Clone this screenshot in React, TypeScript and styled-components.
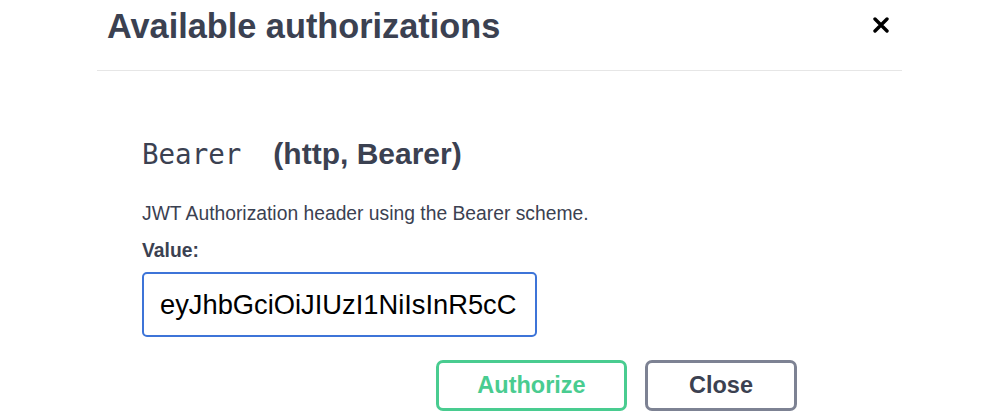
import styled, { createGlobalStyle } from "styled-components";

const GlobalStyle = createGlobalStyle`
  html, body {
    margin: 0;
    padding: 0;
    background: #ffffff;
    font-family: "Liberation Sans", Arial, sans-serif;
  }
`;

const Page = styled.div`
  width: 998px;
  height: 418px;
  overflow: hidden;
  background: #ffffff;
`;

const Modal = styled.div`
  width: 805px;
  margin-left: 97px;
`;

const Header = styled.div`
  display: flex;
  justify-content: space-between;
  align-items: flex-start;
  height: 64px;
  padding: 6px 13px 0 10px;
  border-bottom: 1px solid #e6e6e6;
`;

const Title = styled.h3`
  margin: 0;
  font-size: 34.3px;
  line-height: 40px;
  font-weight: 700;
  color: #3b4151;
`;

const CloseIcon = styled.button`
  margin-top: 11px;
  padding: 0;
  border: none;
  background: none;
  width: 16px;
  height: 16px;
  display: flex;
  cursor: pointer;
`;

const Body = styled.div`
  padding: 65px 0 0 45px;
`;

const SchemeTitle = styled.h4`
  margin: 0;
  font-size: 30px;
  line-height: 36px;
  font-weight: 700;
  color: #3b4151;
`;

const SchemeName = styled.code`
  font-family: "DejaVu Sans Mono", monospace;
  font-size: 27.5px;
  font-weight: 400;
  margin-right: 32px;
`;

const Description = styled.p`
  margin: 30px 0 0;
  font-size: 19.3px;
  line-height: 24px;
  color: #3b4151;
`;

const Label = styled.label`
  display: block;
  margin-top: 13px;
  font-size: 19.3px;
  line-height: 24px;
  font-weight: 700;
  color: #3b4151;
`;

const TokenInput = styled.input`
  display: block;
  box-sizing: border-box;
  margin-top: 9px;
  width: 395px;
  height: 65px;
  padding: 0 15px 0 16px;
  border: 2px solid #3d74d8;
  border-radius: 5px;
  font-family: "Liberation Sans", Arial, sans-serif;
  font-size: 27.3px;
  color: #000000;
  background: #ffffff;
  outline: none;
`;

const Actions = styled.div`
  display: flex;
  justify-content: flex-end;
  gap: 18px;
  margin-top: 23px;
  padding-right: 105px;
`;

const ActionButton = styled.button<{ $tone: "primary" | "neutral"; $w: number }>`
  box-sizing: border-box;
  width: ${(p) => p.$w}px;
  height: 51px;
  border-radius: 7px;
  background: #ffffff;
  font-family: "Liberation Sans", Arial, sans-serif;
  font-size: 23.5px;
  font-weight: 700;
  cursor: pointer;
  border: 3px solid ${(p) => (p.$tone === "primary" ? "#49cc90" : "#7d8293")};
  color: ${(p) => (p.$tone === "primary" ? "#49cc90" : "#3b4151")};
`;

export default function App() {
  return (
    <Page>
      <GlobalStyle />
      <Modal>
        <Header>
          <Title>Available authorizations</Title>
          <CloseIcon aria-label="Close">
            <svg width="16" height="16" viewBox="0 0 16 16">
              <path
                d="M2 2 L14 14 M14 2 L2 14"
                stroke="#000000"
                strokeWidth="3.4"
                strokeLinecap="round"
                fill="none"
              />
            </svg>
          </CloseIcon>
        </Header>
        <Body>
          <SchemeTitle>
            <SchemeName>Bearer</SchemeName>(http, Bearer)
          </SchemeTitle>
          <Description>JWT Authorization header using the Bearer scheme.</Description>
          <Label htmlFor="token">Value:</Label>
          <TokenInput id="token" type="text" defaultValue="eyJhbGciOiJIUzI1NiIsInR5cC" />
          <Actions>
            <ActionButton $tone="primary" $w={191}>Authorize</ActionButton>
            <ActionButton $tone="neutral" $w={152}>Close</ActionButton>
          </Actions>
        </Body>
      </Modal>
    </Page>
  );
}
